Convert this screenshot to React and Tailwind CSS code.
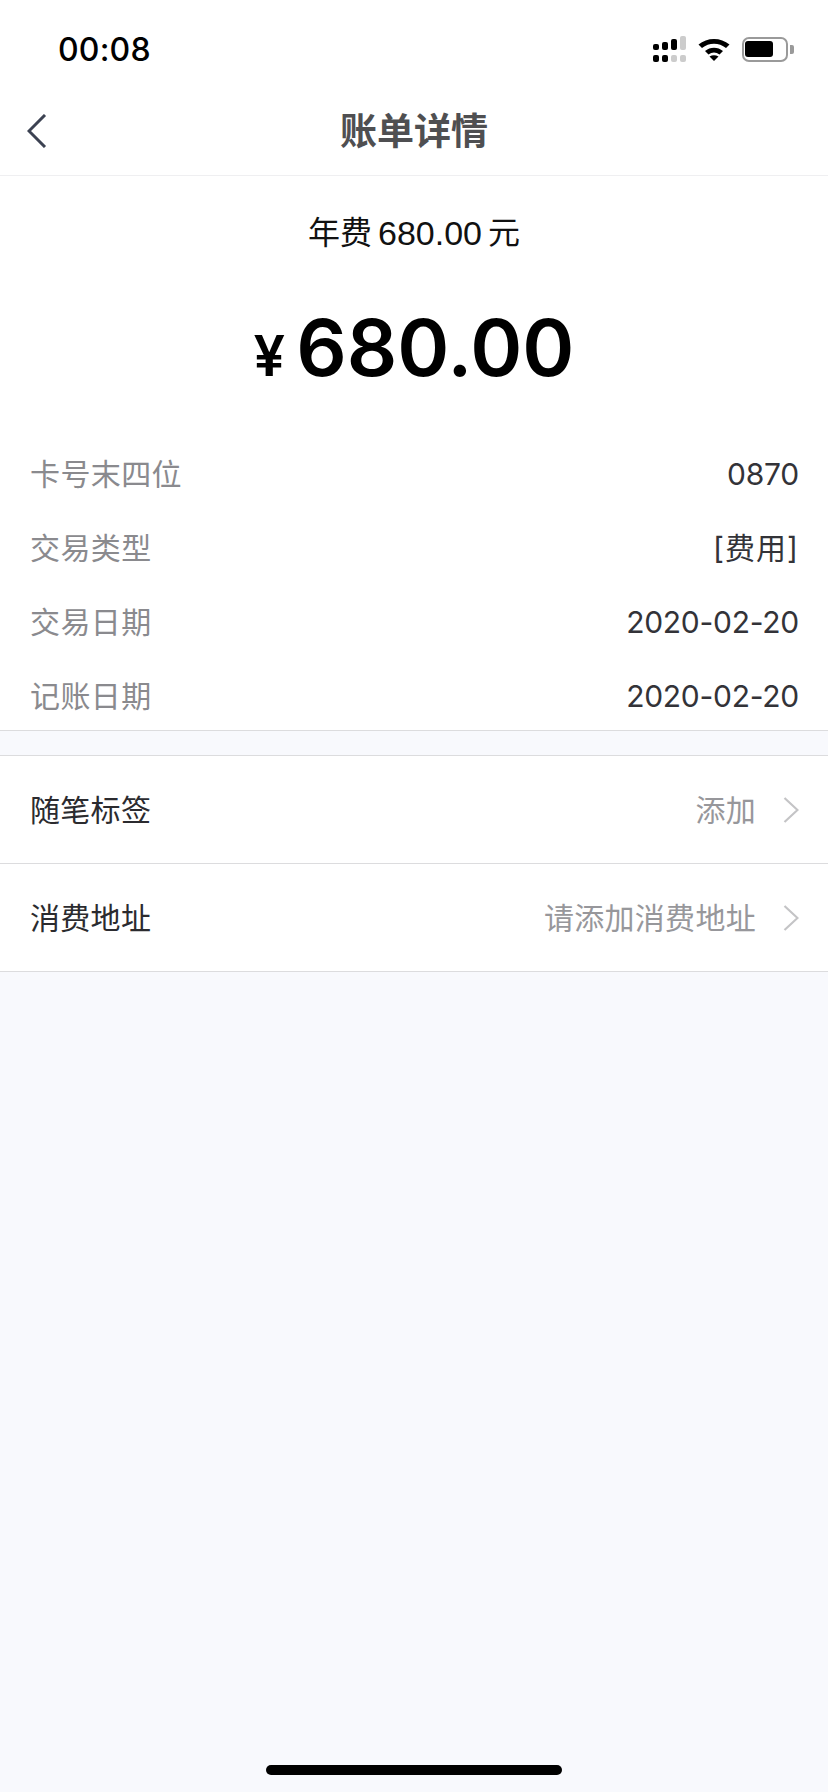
const cjk = "font-['Inter','Noto_Sans_CJK_SC',sans-serif]";

function SignalIcon() {
  return (
    <svg width="33" height="26" viewBox="0 0 33 26">
      <rect x="0" y="8" width="6" height="6" rx="2" fill="#000" />
      <rect x="9" y="6" width="6" height="8" rx="2" fill="#000" />
      <rect x="18" y="3" width="6" height="11" rx="2" fill="#000" />
      <rect x="27" y="0" width="6" height="14" rx="2" fill="#ccc" />
      <rect x="0" y="19" width="6" height="7" rx="2" fill="#000" />
      <rect x="9" y="19" width="6" height="7" rx="2" fill="#000" />
      <rect x="18" y="19" width="6" height="7" rx="2" fill="#ccc" />
      <rect x="27" y="19" width="6" height="7" rx="2" fill="#ccc" />
    </svg>
  );
}

function WifiIcon() {
  return (
    <svg width="32" height="24" viewBox="0 0 32 24">
      <path d="M0.5 7.5 C9 0 23 0 31.5 7.5 L28 11 C21 5.2 11 5.2 4 11 Z" fill="#000" />
      <path d="M7 14 C12 9.5 20 9.5 25 14 L21.5 17.5 C18 14.8 14 14.8 10.5 17.5 Z" fill="#000" />
      <path d="M11.5 19.5 C14.5 17.8 17.5 17.8 20.5 19.5 L16 24 Z" fill="#000" />
    </svg>
  );
}

function BatteryIcon() {
  return (
    <div className="flex items-center">
      <div className="flex items-center w-[46px] h-[25px] rounded-[7px] border-2 border-[#9a9a9a] p-[1px]">
        <div className="w-[28px] h-[16px] rounded-[3px] bg-black" />
      </div>
      <div className="ml-[2px] w-[4px] h-[9px] rounded-r-[2px] bg-[#9a9a9a]" />
    </div>
  );
}

function Chevron() {
  return (
    <svg width="16" height="26" viewBox="0 0 16 26" fill="none">
      <path d="M1.5 1 L14.5 13 L1.5 25" stroke="#c4c4c6" strokeWidth="2.2" />
    </svg>
  );
}

function InfoRow({ label, value, valueClass }) {
  return (
    <div className="flex items-center justify-between h-[40px]">
      <span className="text-[#8a8a8e] tracking-[0.4px]">{label}</span>
      <span className={`text-[#333338] ${valueClass}`}>{value}</span>
    </div>
  );
}

function LinkRow({ label, value }) {
  return (
    <div className="flex items-center justify-between h-[108px] pl-[30px] pr-[29px] border-b border-[#dcdcde]">
      <span className="text-[#2b2b2f] tracking-[0.3px]">{label}</span>
      <div className="flex items-center">
        <span className="text-[#97979b] tracking-[0.3px]">{value}</span>
        <div className="ml-[27px]">
          <Chevron />
        </div>
      </div>
    </div>
  );
}

export default function App() {
  return (
    <div className={`${cjk} flex flex-col w-[828px] h-[1792px] bg-[#f8f9fd] text-[30px] leading-[40px]`}>
      {/* Status bar */}
      <div className="flex items-center justify-between h-[88px] pt-[10px] pl-[58px] pr-[34px] bg-white">
        <span className="mt-[2px] text-[32px] font-medium text-black tracking-[0.2px]">00:08</span>
        <div className="flex items-center gap-[12px]">
          <SignalIcon />
          <WifiIcon />
          <BatteryIcon />
        </div>
      </div>

      {/* Nav */}
      <div className="relative flex items-center justify-center h-[88px] bg-white border-b border-[#efeff1]">
        <svg className="absolute left-[27px] top-[26px]" width="20" height="34" viewBox="0 0 20 34" fill="none">
          <path d="M18 1 L2 17 L18 33" stroke="#3c4252" strokeWidth="3" />
        </svg>
        <span className="text-[37px] font-semibold text-[#4f4f51]">账单详情</span>
      </div>

      {/* Amount */}
      <div className="flex flex-col items-center bg-white">
        <div className="flex items-center gap-[6px] mt-[35px] h-[44px] text-[32px] leading-[44px] text-[#111] font-['Liberation_Sans','Noto_Sans_CJK_SC',sans-serif]">
          <span>年费</span>
          <span className="text-[34px]">680.00</span>
          <span>元</span>
        </div>
        <div className="flex items-baseline mt-[42px] h-[100px] text-black">
          <span className="text-[56px] leading-[100px] font-semibold mr-[11px]">¥</span>
          <span className="text-[79px] leading-[100px] font-semibold">680.00</span>
        </div>
      </div>

      {/* Details */}
      <div className="flex flex-col gap-[34px] pt-[57px] pb-[14px] pl-[30px] pr-[29px] bg-white border-b border-[#dcdcde]">
        <InfoRow label="卡号末四位" value="0870" valueClass="tracking-[-0.26px]" />
        <InfoRow label="交易类型" value="[费用]" valueClass="tracking-[1px]" />
        <InfoRow label="交易日期" value="2020-02-20" valueClass="tracking-[-0.26px]" />
        <InfoRow label="记账日期" value="2020-02-20" valueClass="tracking-[-0.26px]" />
      </div>

      {/* Links */}
      <div className="mt-[24px] bg-white border-t border-[#dcdcde]">
        <LinkRow label="随笔标签" value="添加" />
        <LinkRow label="消费地址" value="请添加消费地址" />
      </div>

      {/* Home indicator */}
      <div className="flex justify-center mt-auto pb-[17px]">
        <div className="w-[296px] h-[10px] rounded-full bg-black" />
      </div>
    </div>
  );
}
